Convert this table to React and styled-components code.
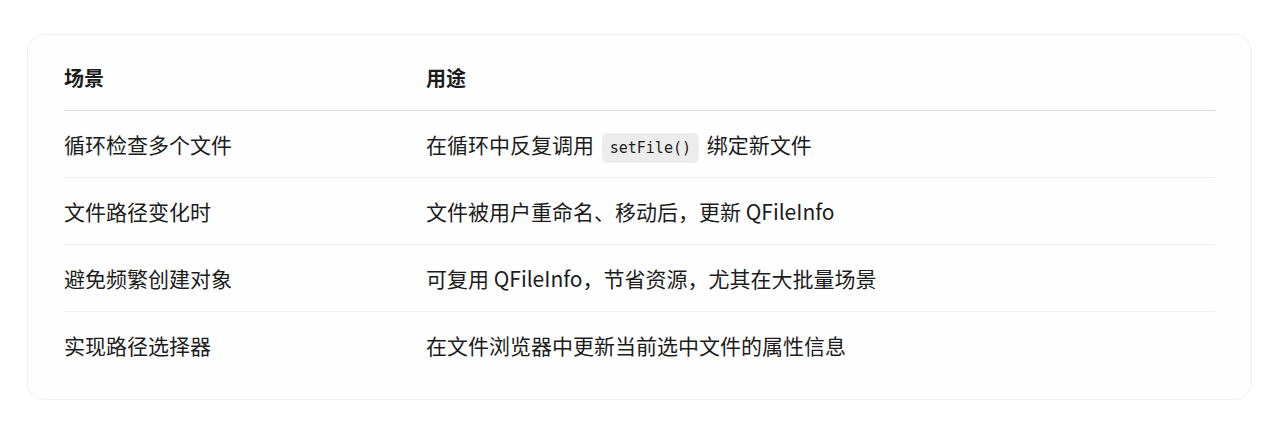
import React from 'react';
import styled, { createGlobalStyle } from 'styled-components';

const GlobalStyle = createGlobalStyle`
  html, body {
    margin: 0;
    padding: 0;
    background: #ffffff;
  }
  body {
    font-family: "Noto Sans CJK SC", "Noto Sans", sans-serif;
    color: #1c1c1c;
  }
`;

const Page = styled.div`
  padding: 34px 21px 45px 27px;
`;

const Card = styled.div`
  border: 1px solid #efefef;
  border-radius: 18px;
  background: #fefefe;
  padding: 9px 36px 20px 36px;
`;

const Table = styled.table`
  width: 100%;
  border-collapse: collapse;
  font-size: 21px;
`;

const HeadCell = styled.th`
  text-align: left;
  font-weight: 700;
  font-size: 20px;
  height: 66px;
  padding: 0;
  border-bottom: 1px solid #d9d9d9;
  width: ${(p) => p.$width || 'auto'};
`;

const Row = styled.tr`
  border-bottom: 1px solid ${(p) => (p.$last ? 'transparent' : '#f0f0f0')};
`;

const Cell = styled.td`
  height: 66px;
  padding: 0;
  vertical-align: middle;
`;

const Code = styled.code`
  font-family: "DejaVu Sans Mono", "Liberation Mono", monospace;
  font-size: 15px;
  background: #ececec;
  border-radius: 6px;
  padding: 6px 8px;
  margin: 0 3px;
`;

const rows = [
  ['循环检查多个文件', <>在循环中反复调用 <Code>setFile()</Code> 绑定新文件</>],
  ['文件路径变化时', '文件被用户重命名、移动后，更新 QFileInfo'],
  ['避免频繁创建对象', '可复用 QFileInfo，节省资源，尤其在大批量场景'],
  ['实现路径选择器', '在文件浏览器中更新当前选中文件的属性信息'],
];

function App() {
  return (
    <Page>
      <GlobalStyle />
      <Card>
        <Table>
          <thead>
            <tr>
              <HeadCell $width="362px">场景</HeadCell>
              <HeadCell>用途</HeadCell>
            </tr>
          </thead>
          <tbody>
            {rows.map((r, i) => (
              <Row key={i} $last={i === rows.length - 1}>
                <Cell>{r[0]}</Cell>
                <Cell>{r[1]}</Cell>
              </Row>
            ))}
          </tbody>
        </Table>
      </Card>
    </Page>
  );
}

export default App;
